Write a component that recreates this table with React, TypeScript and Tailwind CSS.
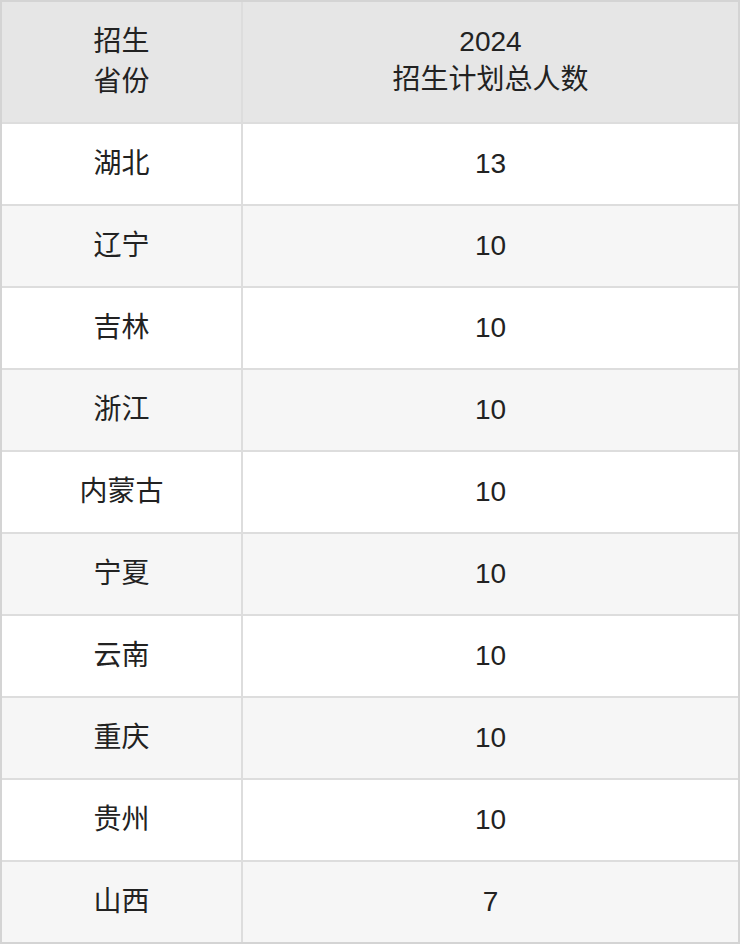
const rows: [string, string][] = [
  ["湖北", "13"],
  ["辽宁", "10"],
  ["吉林", "10"],
  ["浙江", "10"],
  ["内蒙古", "10"],
  ["宁夏", "10"],
  ["云南", "10"],
  ["重庆", "10"],
  ["贵州", "10"],
  ["山西", "7"],
];

const font = {
  fontFamily: '"Liberation Sans", "Noto Sans CJK SC", sans-serif',
};

export default function App() {
  return (
    <div
      className="w-[740px] h-[944px] border-2 border-[#d4d4d4] flex flex-col bg-[#dddddd] gap-[2px] text-[28px] text-[#222]"
      style={font}
    >
      <div className="flex h-[120px] gap-[2px] shrink-0">
        <div className="w-[239px] bg-[#e6e6e6] flex items-center justify-center text-center leading-[40px]">
          招生
          <br />
          省份
        </div>
        <div className="flex-1 bg-[#e6e6e6] flex items-center justify-center text-center leading-[38px] pb-[2px]">
          2024
          <br />
          招生计划总人数
        </div>
      </div>
      {rows.map(([prov, num], i) => (
        <div key={prov} className="flex h-[80px] gap-[2px] shrink-0">
          <div
            className={`w-[239px] flex items-center justify-center ${
              i % 2 === 0 ? "bg-white" : "bg-[#f6f6f6]"
            }`}
          >
            {prov}
          </div>
          <div
            className={`flex-1 flex items-center justify-center ${
              i % 2 === 0 ? "bg-white" : "bg-[#f6f6f6]"
            }`}
          >
            {num}
          </div>
        </div>
      ))}
    </div>
  );
}
